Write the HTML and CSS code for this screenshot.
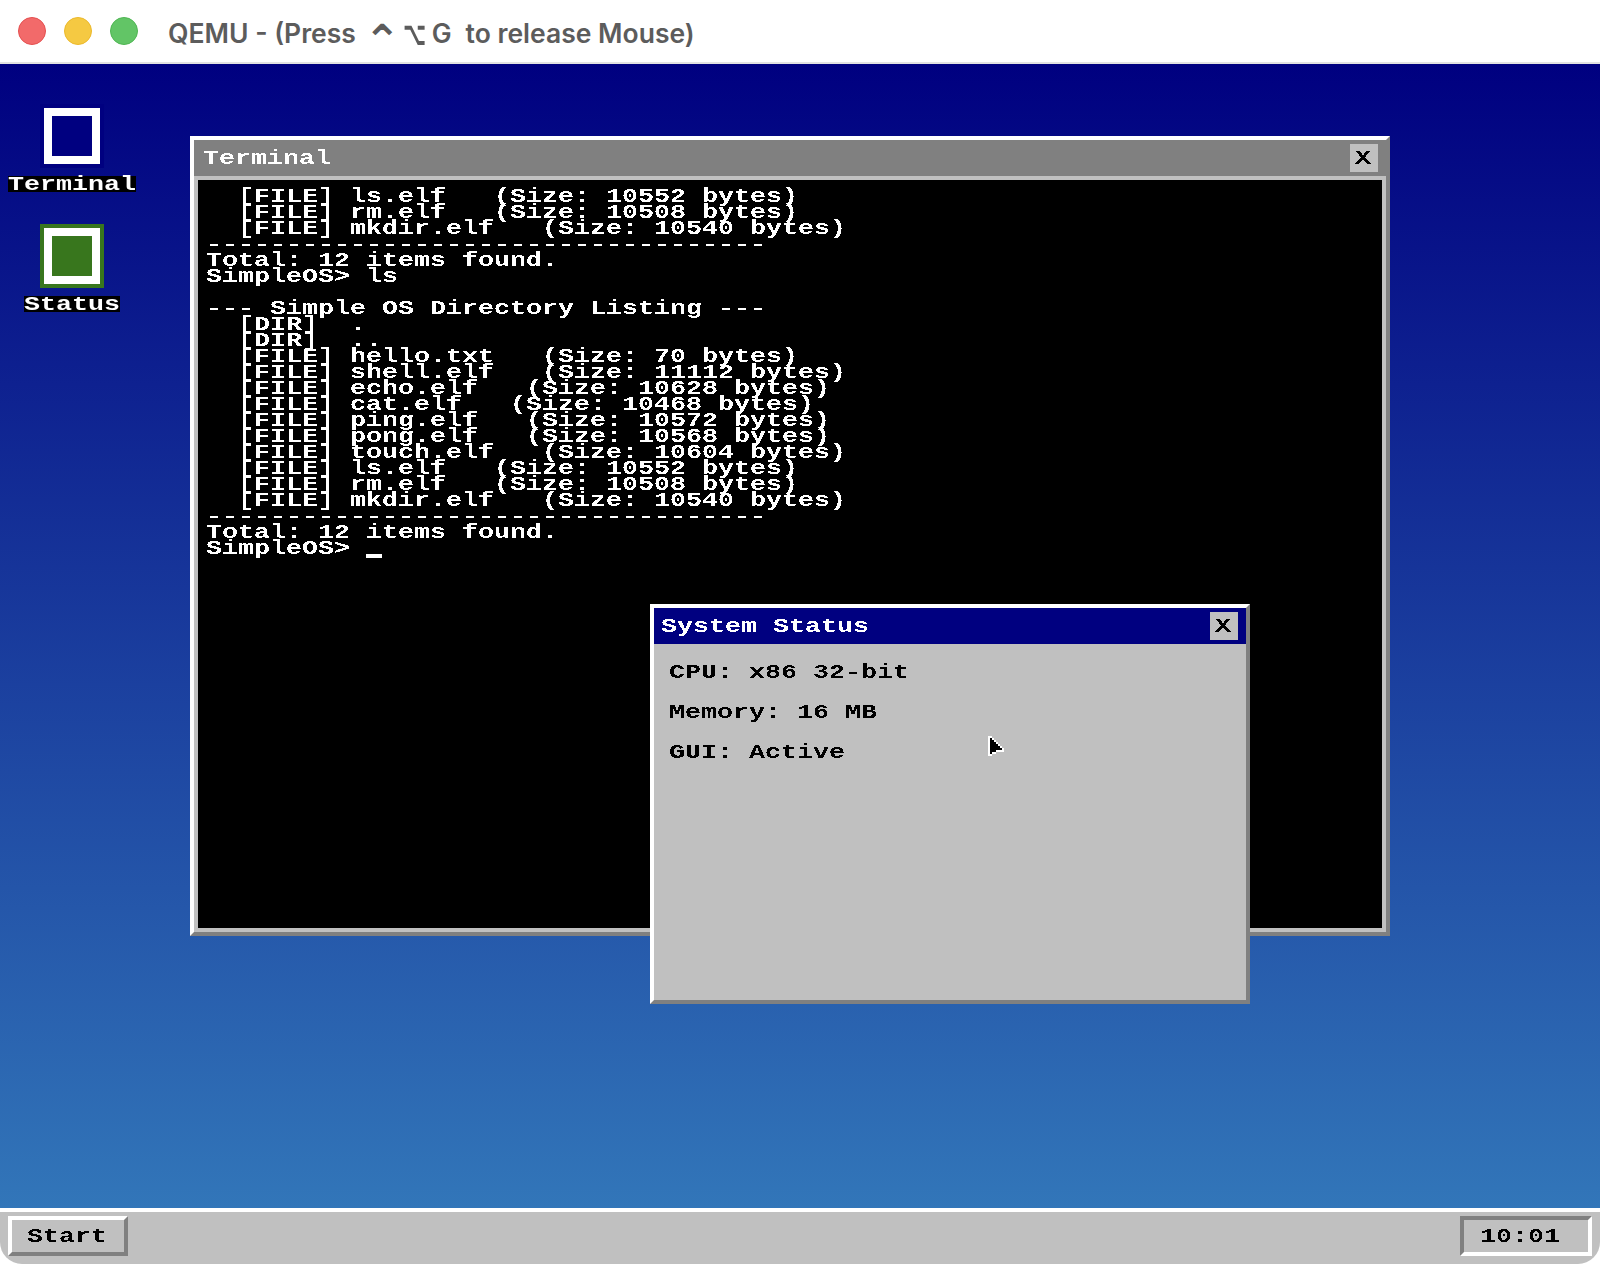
FILE: index.html
```
<!DOCTYPE html>
<html lang="en">
<head>
<meta charset="utf-8">
<title>QEMU</title>
<link rel="stylesheet" href="styles.css">
</head>
<body>
<svg class="defs" width="0" height="0" aria-hidden="true"><filter id="crisp" x="0" y="0" width="100%" height="100%" color-interpolation-filters="sRGB"><feComponentTransfer><feFuncA type="discrete" tableValues="0 0 1 1"/></feComponentTransfer></filter></svg>
<div class="shell">
  <header class="titlebar">
    <div class="lights">
      <span class="light red"></span>
      <span class="light yellow"></span>
      <span class="light green"></span>
    </div>
    <div class="app-title">QEMU - (Press<span class="sym sym-ctrl">⌃</span><span class="sym sym-opt">⌥</span><span class="key">G</span>to release Mouse)</div>
  </header>
  <main class="desktop">
    <nav class="icons">
      <div class="icon-item">
        <div class="icon icon-terminal"><div class="icon-fill"></div></div>
        <div class="vga icon-label">Terminal</div>
      </div>
      <div class="icon-item">
        <div class="icon icon-status"><div class="icon-fill"></div></div>
        <div class="vga icon-label">Status</div>
      </div>
    </nav>

    <section class="window window-terminal">
      <div class="win-bar bar-inactive">
        <div class="vga win-title">Terminal</div>
        <div class="close"><span class="vga">X</span></div>
      </div>
      <div class="term-body">
<pre class="vga term-text">  [FILE] ls.elf   (Size: 10552 bytes)
  [FILE] rm.elf   (Size: 10508 bytes)
  [FILE] mkdir.elf   (Size: 10540 bytes)
-----------------------------------
Total: 12 items found.
SimpleOS&gt; ls

--- Simple OS Directory Listing ---
  [DIR]  .
  [DIR]  ..
  [FILE] hello.txt   (Size: 70 bytes)
  [FILE] shell.elf   (Size: 11112 bytes)
  [FILE] echo.elf   (Size: 10628 bytes)
  [FILE] cat.elf   (Size: 10468 bytes)
  [FILE] ping.elf   (Size: 10572 bytes)
  [FILE] pong.elf   (Size: 10568 bytes)
  [FILE] touch.elf   (Size: 10604 bytes)
  [FILE] ls.elf   (Size: 10552 bytes)
  [FILE] rm.elf   (Size: 10508 bytes)
  [FILE] mkdir.elf   (Size: 10540 bytes)
-----------------------------------
Total: 12 items found.
SimpleOS&gt; <span class="caret"></span></pre>
      </div>
    </section>

    <section class="window window-status">
      <div class="win-bar bar-active">
        <div class="vga win-title">System Status</div>
        <div class="close"><span class="vga">X</span></div>
      </div>
      <div class="status-body">
        <div class="vga status-line">CPU: x86 32-bit</div>
        <div class="vga status-line">Memory: 16 MB</div>
        <div class="vga status-line">GUI: Active</div>
      </div>
    </section>

    <svg class="cursor" width="20" height="22" viewBox="0 0 10 11" shape-rendering="crispEdges" aria-hidden="true">
      <path fill="#fff" d="M0 0h1v1h1v1h1v1h1v1h1v1h1v1h1v1h1v2H4v1H2v1H0z" transform="translate(0 -1)"/>
      <path fill="#000" d="M1 0h1v1h1v1h1v1h1v1h1v1h1v1H4v1H2v1H1z" transform="translate(0 1)"/>
    </svg>
  </main>
  <footer class="taskbar">
    <div class="start"><span class="vga">Start</span></div>
    <div class="clock"><span class="vga clock-text">10:01</span></div>
  </footer>
</div>
</body>
</html>
```
FILE: styles.css
```
* { box-sizing: border-box; }
html, body { margin: 0; padding: 0; background: #fff; }
.defs { position: absolute; }
.shell {
  width: 1600px;
  height: 1264px;
  display: flex;
  flex-direction: column;
  border-radius: 0 0 22px 22px;
  overflow: hidden;
}

.titlebar {
  flex: 0 0 64px;
  display: flex;
  align-items: center;
  background: #fff;
  border-bottom: 2px solid #e2e2e2;
  padding: 0 0 0 18px;
}
.lights { display: flex; gap: 18px; }
.light { width: 28px; height: 28px; border-radius: 50%; border: 1px solid; }
.red { background: #f26a6a; border-color: #e55050; }
.yellow { background: #f5c942; border-color: #ecb92c; }
.green { background: #62c566; border-color: #4fb653; }
.app-title {
  margin-left: 30px;
  padding-top: 3px;
  font: 600 26.5px/32px Inter, "DejaVu Sans", sans-serif;
  color: #5c5c5c;
  white-space: pre;
}
.sym, .key { display: inline-block; text-align: center; }
.sym { font-family: "DejaVu Sans", sans-serif; font-weight: 700; line-height: 0; }
.sym-ctrl { margin-left: 8px; font-size: 44px; vertical-align: -13px; }
.sym-opt { width: 21px; font-size: 25px; vertical-align: 1px; transform: scale(0.8, 1.35); }
.key { margin-left: 10px; margin-right: 14px; }

.vga {
  font: 700 20px/16px "Liberation Mono", monospace;
  white-space: pre;
  transform: translate(-1px, 1px) scaleX(1.3333);
  filter: url(#crisp);
}

.desktop {
  flex: 1;
  position: relative;
  background: linear-gradient(180deg, #000080 0%, #3276b9 100%);
  padding: 40px 0 0 8px;
}
.icons { width: 128px; display: flex; flex-direction: column; gap: 32px; }
.icon-item { display: flex; flex-direction: column; align-items: center; gap: 8px; }
.icon { width: 64px; height: 64px; border: 4px solid; }
.icon-fill { width: 100%; height: 100%; border: 8px solid #fff; }
.icon-terminal { border-color: #000080; }
.icon-terminal .icon-fill { background: #000080; }
.icon-status { border-color: #38761d; }
.icon-status .icon-fill { background: #38761d; }
.icon-label {
  filter: none;
  background: #000;
  color: #fff;
  height: 16px;
  padding-top: 1px;
  transform: scaleX(1.3333);
}

.window {
  position: absolute;
  display: flex;
  flex-direction: column;
  border: 4px solid;
  border-color: #fff #808080 #808080 #fff;
}
.window-terminal { left: 190px; top: 72px; width: 1200px; height: 800px; }
.window-status { left: 650px; top: 540px; width: 600px; height: 400px; background: #c0c0c0; }
.win-bar {
  flex: 0 0 36px;
  display: flex;
  align-items: center;
  justify-content: space-between;
  padding: 0 8px 0 10px;
  color: #fff;
}
.bar-inactive { background: #808080; }
.bar-active { background: #000080; padding-left: 8px; }
.win-title { transform-origin: 0 50%; }
.close {
  width: 28px;
  height: 28px;
  background: #c0c0c0;
  color: #000;
  display: flex;
  align-items: center;
  justify-content: center;
}
.term-body {
  flex: 1;
  background: #000;
  border: 4px solid #c0c0c0;
  padding: 8px 0 0 9px;
  overflow: hidden;
}
.term-text {
  margin: 0;
  color: #fff;
  transform-origin: 0 0;
}
.caret {
  display: inline-block;
  width: 12px;
  height: 4px;
  background: #fff;
  vertical-align: -4px;
}
.status-body {
  flex: 1;
  padding: 20px 0 0 16px;
  display: flex;
  flex-direction: column;
  gap: 24px;
  color: #000;
}
.status-line { height: 16px; transform-origin: 0 0; }

.cursor { position: absolute; left: 988px; top: 672px; }

.taskbar {
  flex: 0 0 56px;
  display: flex;
  align-items: center;
  justify-content: space-between;
  background: #c0c0c0;
  border-top: 4px solid #fff;
  padding: 4px 8px 8px;
}
.start, .clock {
  height: 40px;
  display: flex;
  align-items: center;
  border: 4px solid;
}
.start {
  width: 120px;
  justify-content: center;
  border-color: #fff #808080 #808080 #fff;
}
.clock {
  width: 132px;
  justify-content: center;
  padding-right: 12px;
  border-color: #808080 #fff #fff #808080;
}
.clock-text { transform: translate(0, 1px) scaleX(1.3333); }
```
